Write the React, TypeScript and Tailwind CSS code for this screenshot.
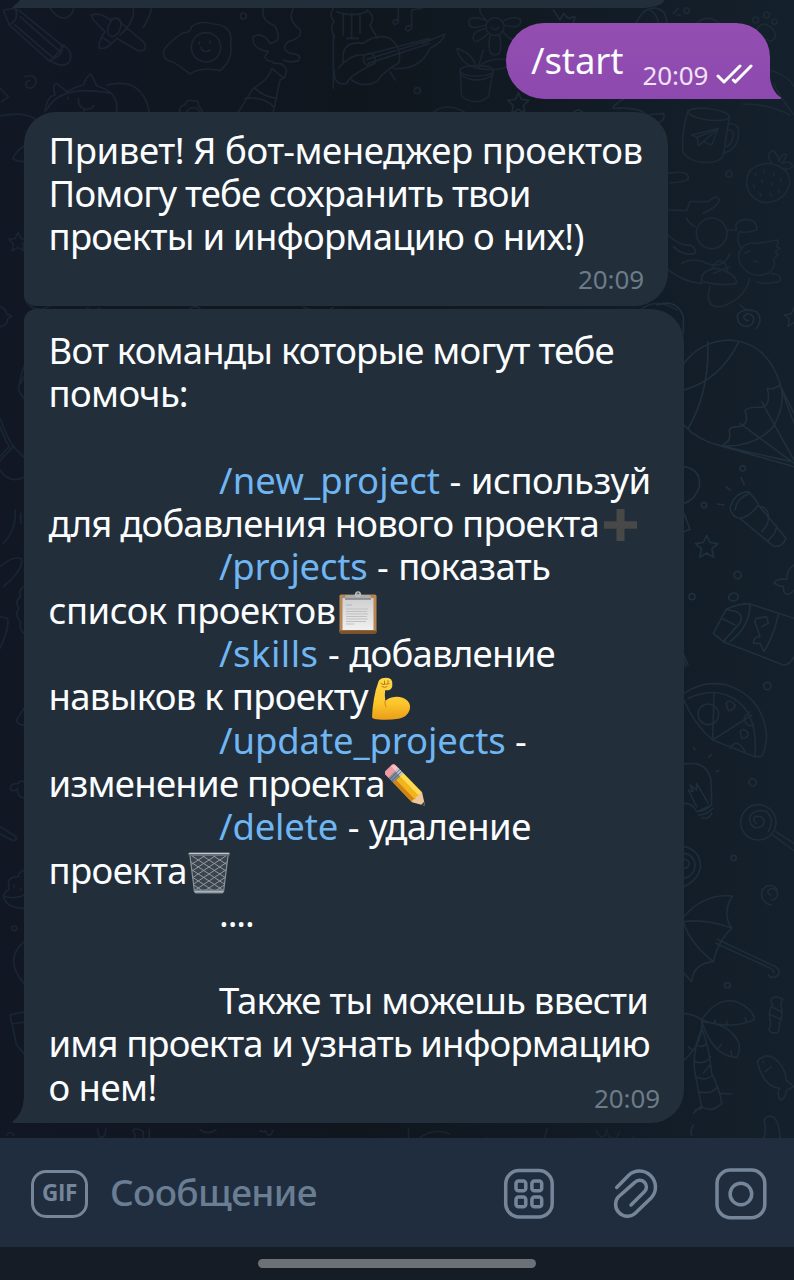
import type { ReactNode } from "react";

/* ---------- wallpaper ---------- */

const STAR = "M0 -32 L9 -12 L32 -9 L15 6 L20 30 L0 18 L-20 30 L-15 6 L-32 -9 L-9 -12Z";

function Wallpaper() {
  return (
    <svg
      className="absolute inset-0"
      width="794"
      height="1138"
      viewBox="0 0 794 1138"
      fill="none"
      strokeLinecap="round"
      strokeLinejoin="round"
      aria-hidden="true"
    >
      {/* top strip */}
      <g transform="scale(.33333)" stroke="#1b2531" strokeWidth="5">
        <path d="M10 30 L45 25 L62 35 L190 140 L150 185 L28 75 Z M45 25 Q60 55 28 75 M60 50 L180 155 M45 75 L155 170 M190 135 Q225 160 205 190 Q180 205 150 180 M180 130 Q200 165 150 180" />
        <path d="M150 25 Q170 55 195 55 Q220 45 220 25" />
        <path d="M275 45 Q300 35 330 60 Q350 45 365 70 L435 130 Q440 160 410 150 L350 115 Q320 150 300 145 Q290 130 315 95 L280 60Z M400 25 Q405 65 360 105 M455 25 Q445 60 430 83 M305 110 l25 18" />
        <ellipse cx="343" cy="82" rx="18" ry="29" transform="rotate(22 343 82)" />
        <path d="M75 230 Q108 220 108 248 Q100 270 80 262 Q70 245 90 242 M0 265 L25 290 L5 305" />
        <path d="M135 335 Q140 290 165 285 Q155 255 170 250 Q190 265 200 275 Q240 255 250 255 Q262 225 272 222 Q285 245 290 258 Q340 270 350 310 V340 M140 330 Q180 250 335 280 M320 255 Q430 230 448 338 M235 295 q0 28 18 32 t28 -10 M252 325 v12 M205 292 v6" />
        <path d="M540 340 q-5 -25 15 -25 q5 -20 25 -12 q20 -5 15 15 q15 10 10 25 M560 335 q20 -25 40 0" />
        <path d="M490 155 Q500 130 550 98 Q570 100 575 80 Q600 60 640 72 Q700 75 692 130 Q700 180 660 212 Q600 200 570 222 Q530 190 515 185 Q490 180 490 155Z M602 142 q8 20 28 8 M598 132v-6 M630 130v-8" />
        <circle cx="618" cy="142" r="44" />
        <circle cx="730" cy="48" r="9" />
        <path d="M790 25 Q780 60 825 78 Q850 125 810 130 Q790 95 760 110 Q752 145 805 155 Q780 180 820 185 M880 25 Q860 60 900 88 Q910 112 865 125 Q840 145 870 160 Q910 162 895 182 Q870 190 850 180" />
        <path d="M820 190 Q850 185 860 210 L855 232 L840 240 L820 335 M815 205 Q810 235 760 265 L712 340 M735 295 Q795 290 820 320 M765 265 Q790 290 830 295 M815 205 l38 30" />
        <path d="M1000 25 q-15 20 2 40 q-15 20 2 45 M1100 30 q30 20 10 45 l22 40 M1000 110 V265 M1030 40v65 M1055 40v75 M1080 40v60 M1040 115h35 M1010 35 q45 18 90 0" />
        <path d="M1030 190 Q1020 120 1090 130 Q1130 100 1170 115 Q1210 150 1195 190 Q1150 215 1130 245 Q1090 265 1055 240 M1095 165 L1290 115 M1105 190 L1290 130 M1100 178 L1285 122 M1270 130 L1335 102 Q1330 125 1290 145 Q1260 212 1180 205 M1015 205 Q1050 160 1095 165 M1125 190 Q1050 225 1040 250 Q1000 260 1003 210 M1170 215 l15 25" />
        <circle cx="1108" cy="178" r="18" />
        <path d="M1195 25 v40 q-10 15 -16 2 q0 -10 16 -8 M1265 25 l-30 5 v55 q-12 15 -18 2 q0 -12 18 -10" />
        <circle cx="1252" cy="272" r="9" />
        <path d="M1380 210 L1385 290 Q1430 320 1465 290 L1480 210 M1382 225 Q1430 255 1480 225 M1430 205 Q1420 160 1370 145 Q1380 190 1430 205 M1435 205 Q1455 170 1540 180 Q1520 220 1435 205 M1435 200 L1450 150" />
        <ellipse cx="1430" cy="212" rx="50" ry="16" />
        <circle cx="1485" cy="80" r="27" />
        <path d="M1458 75 Q1400 95 1408 60 Q1420 45 1460 62 Q1425 25 1450 15 M1512 75 Q1565 90 1562 60 Q1550 45 1510 62 M1465 100 Q1420 140 1420 115 Q1415 95 1458 85 M1470 105 Q1460 165 1485 165 Q1510 165 1498 105 M1508 95 Q1545 135 1550 110 M1474 82 q10 14 22 0" />
        <path d="M1300 337 Q1340 305 1395 337" />
      </g>
      {/* upper right */}
      <g transform="translate(490 0) scale(.33333)" stroke="#1d2a36" strokeWidth="5">
        <path d="M190 30 l20 30 l10 -20 l15 15 l20 -5 l-5 18 M440 68 Q460 20 500 25 Q530 30 530 68 M480 30 q20 10 25 38 M550 40 l15 -15 M560 45 h10 M620 70 Q650 40 690 70" />
        <circle cx="590" cy="32" r="8" />
        <path d="M800 110 Q795 75 825 72 Q860 85 855 115 Q840 130 830 118" />
        <circle cx="797" cy="60" r="9" />
        <circle cx="830" cy="45" r="9" />
        <circle cx="853" cy="65" r="8" />
        <path d="M840 210 Q900 230 912 260 M850 250 Q870 290 912 345 M760 312 Q830 310 900 345" />
        <path transform="translate(85 310)" d={STAR} />
        <path d="M250 337 q15 -15 28 0 M370 320 Q390 300 400 298 M370 325 Q450 320 470 345 L520 340 Q530 360 500 370" />
        <path d="M595 330 Q575 390 578 455 Q600 490 650 487 Q690 488 700 465 L718 350 M715 372 Q755 365 743 420 Q735 450 705 458 M715 390 Q735 390 728 415 Q722 435 710 440 M605 405 L685 385 L665 435 L640 425 L625 437 L622 412Z M622 412 L682 388 L640 425" />
        <ellipse cx="657" cy="343" rx="62" ry="17" transform="rotate(7 657 343)" />
        <circle cx="717" cy="522" r="9" />
        <path d="M770 555 Q765 495 835 490 Q905 500 898 555 Q885 605 825 608 Q780 600 770 555Z M845 488 Q825 460 850 452 Q865 465 868 485 Q875 455 890 465 Q885 480 875 490 Q905 480 908 500 Q895 512 875 505 M795 520l3 8 M820 510l3 8 M850 520l3 8 M790 555l3 8 M815 540l3 8 M845 550l3 8 M870 535l3 8 M810 580l3 8 M840 580l3 8 M865 570l3 8" />
        <path d="M535 520 Q590 510 595 530 Q598 547 540 548 M535 630 L590 632 L600 605 L655 605 Q680 580 688 600 Q685 620 640 640 M535 705 Q570 740 600 735 Q620 745 615 760 Q580 770 550 740 M590 655 q5 15 25 25 M710 690 Q740 690 740 690 Q730 665 765 658 Q805 660 800 690 Q770 700 748 695 Q735 725 755 745" />
        <circle cx="665" cy="700" r="46" />
        <path d="M755 745 Q770 725 800 730 L865 720 L860 740 L870 745 L855 755 L865 765 L850 775 Q860 800 835 820 Q780 840 750 790 Q740 760 755 745Z M765 760l15 -8 M790 785 q10 -5 15 3 M845 820 Q880 825 868 845 Q820 855 800 845" />
        <path d="M575 790 Q610 770 650 790 Q700 810 720 760 M635 845 Q630 810 680 805 Q740 820 740 850 Q690 860 640 845 M660 860 Q640 930 700 918 Q770 890 778 835 M535 810 Q590 850 635 850 M668 805 Q680 770 705 790 L715 820 M670 820 L720 800" />
        <path d="M450 930 Q500 890 560 930 M750 915 q20 15 20 15" />
      </g>
      {/* right column, upper half */}
      <g transform="translate(640 290) scale(.33333)" stroke="#1f2f3c" strokeWidth="5">
        <path d="M50 45 Q110 25 130 80 V130" />
        <path d="M325 92 Q310 90 312 78 Q325 65 340 80 Q345 105 320 110 Q290 105 292 75 Q310 50 350 65 Q370 90 350 115" />
        <path transform="translate(462 82) scale(.9)" d={STAR} />
        <path d="M132 220 Q180 155 265 150 Q380 155 420 280 Q440 340 400 410 Q340 475 240 467 Q170 450 132 405 M203 155 Q210 300 145 415 M297 155 Q240 270 132 300 M420 285 Q400 300 382 295 Q395 350 360 352 Q325 350 315 362 Q330 405 295 410 Q265 410 268 425 Q275 455 250 462 M240 467 L462 530 M300 400 L462 520 M365 335 L462 510 M420 285 L462 370 M425 300 L462 400 M240 467 L455 515" />
        <circle cx="308" cy="535" r="8" />
        <circle cx="192" cy="645" r="8" />
        <circle cx="293" cy="855" r="11" />
        <circle cx="156" cy="920" r="9" />
        <path d="M132 530 Q185 540 178 590 Q165 630 132 640 M132 670 L150 718 L132 725" />
        <path d="M303 562 l10 22 M258 590 l12 10 M232 642 l20 3" />
        <path d="M270 655 Q280 610 325 605 Q350 630 355 645 Q330 680 300 685 Q275 680 270 655Z M285 660 Q290 625 325 612 M300 685 L400 768 Q425 775 438 745 L355 645 M360 650 Q380 650 385 675 M385 675 Q390 700 365 725 M410 705 Q410 730 385 750" />
        <path transform="translate(200 770) scale(1.05)" d={STAR} />
        <path d="M462 825 Q440 840 440 868 Q405 865 403 880 Q420 890 430 890 Q430 915 445 912 Q462 905 462 900" />
        <path d="M265 925 Q270 905 290 910 Q300 920 290 930 Q275 938 265 925Z M220 1030 L258 958 Q300 940 330 942 L462 985 M220 1030 L250 1055 L430 1125 Q450 1125 462 1100 M258 958 L290 965 Q320 985 285 1015 L250 1055 M330 942 Q330 1010 270 1055 M245 985 L285 1005 M415 975 Q400 1040 372 1085 L360 1060 L340 1060 Q340 1040 360 1040 L350 1010 Q340 990 350 985 L380 980 L385 1000 L365 1010 M300 945 l15 -5" />
        <path d="M132 1095 l12 30 M132 1110 l5 20" />
        <circle cx="382" cy="1188" r="11" />
      </g>
      {/* right column, lower half */}
      <g transform="translate(640 660) scale(.33333)" stroke="#1e2d39" strokeWidth="5">
        <path d="M132 100 Q190 60 260 75 Q370 110 380 230 Q378 265 365 290 L345 290 L218 240 Q160 190 132 120 M145 115 Q220 80 280 115 Q355 160 345 288 M222 100 L218 240 L335 165 M270 265 Q290 230 315 275 M330 155 Q305 170 318 190 Q325 200 342 195 M258 130 Q270 115 285 135 Q285 150 265 152Z M300 215 Q310 200 325 220 Q325 235 305 235Z" />
        <circle cx="205" cy="163" r="31" />
        <circle cx="338" cy="367" r="11" />
        <circle cx="281" cy="594" r="8" />
        <circle cx="262" cy="976" r="8" />
        <path d="M160 262l5 8 M205 292l10 -8 M228 335l8 -4 M132 312 Q200 300 213 360 Q215 400 215 435 L170 455 Q160 430 132 430 M172 455 Q195 455 215 435 M175 465 Q200 465 218 445 M185 473 Q205 480 215 460 M170 440 L145 390 L160 395 L150 375 L170 390 L170 370 L205 430" />
        <circle cx="355" cy="487" r="53" />
        <path d="M350 490 Q335 480 345 470 Q370 465 372 485 Q370 505 345 503 Q322 490 332 465 Q350 445 380 455 Q405 480 385 515 M398 525 L462 572 M407 515 L462 550" />
        <path d="M132 560 Q180 570 182 620 Q175 660 132 680 M132 580 Q165 585 165 620 Q160 650 132 655 M132 597 q18 5 15 15 q-3 15 -15 12" />
        <path d="M392 705 Q380 700 385 690 Q400 680 412 695 Q415 718 395 720 M412 700 Q415 680 390 676 Q362 680 365 710 Q375 735 395 735" />
        <path d="M132 770 Q190 700 277 708 Q245 760 275 805 Q235 840 220 905 Q160 910 155 965 L132 940 M132 785 Q200 775 275 805 M132 790 Q150 850 220 905 M232 838 L395 915 Q425 925 415 945 Q395 960 385 945 M228 850 L385 922 Q405 930 400 938" />
        <path d="M185 1080 Q230 1010 290 1025 Q345 1050 342 1080 Q270 1110 185 1080Z M185 1085 Q270 1090 297 1150 Q300 1180 290 1192 Q220 1190 185 1085 M132 1060 Q170 1065 185 1080 Q190 1150 132 1200 M225 1092v-12 M260 1098v-14 M320 1085l-5 -12 M235 1165l10 -12 M275 1188l-2 -14 M145 1160l10 10 M185 1105 Q155 1180 165 1240 L185 1340 Q215 1360 245 1330 Q240 1290 215 1240 Q205 1150 185 1105 M168 1155 Q190 1165 200 1150 M165 1205 Q195 1215 212 1190 M168 1250 Q200 1265 218 1245 M175 1295 Q215 1305 232 1280 M190 1240 l20 -25 M240 1300 l35 2 M160 1360 l25 -22 M165 1350l20 -5 M160 1395 Q150 1410 155 1425" />
        <path d="M395 1015 Q410 1005 428 1018 Q420 1030 425 1045 Q428 1075 418 1090 Q420 1110 412 1118 Q390 1122 387 1108 Q395 1095 390 1080 Q385 1050 398 1035 Q390 1025 395 1015 M395 1040l28 15 M393 1065l28 12" />
        <path d="M352 1205 Q380 1170 415 1205 Q440 1235 438 1260 L462 1280 L440 1290 Q435 1320 420 1320 Q410 1300 418 1285 Q370 1280 352 1205Z M375 1235l20 -15 M370 1205v3" />
        <path d="M372 1435 Q380 1410 372 1380 Q385 1360 405 1375 Q420 1400 420 1435" />
      </g>
      {/* left gutter */}
      <g transform="translate(0 90) scale(.33333)" stroke="#1a2534" strokeWidth="5">
        <path d="M0 78 Q80 62 112 92 M78 165 Q50 180 38 205 Q55 218 78 213" />
        <path transform="translate(54 456) scale(.9)" d={STAR} />
        <path d="M0 650 Q18 655 20 672 L35 678 L22 688 Q25 705 0 710 M74 620 Q80 655 120 658 Q140 655 150 645 M260 655 q20 10 40 0 M570 655 q15 -10 30 0 M910 652 q60 20 90 0" />
        <path d="M75 820 Q60 860 55 900 L75 930 M62 880l14 -30 M0 985 Q20 1040 40 1070 L0 1112 M0 1010 Q15 1050 28 1070 L0 1100 M0 1140 Q30 1185 75 1160 M40 1070 L75 1105 M45 1260 Q50 1320 10 1360 M62 1270v30 M0 1430 Q40 1395 65 1407 Q70 1440 10 1490" />
      </g>
      <g transform="translate(0 580) scale(.33333)" stroke="#1a2534" strokeWidth="5">
        <path d="M0 110 L22 115 Q30 140 0 205 M72 20 q-20 10 -10 30 q-20 15 -5 35 q-15 20 5 40 q-5 25 10 35 M75 380 q-15 25 -25 40 q0 15 25 15 M72 605 q-15 -5 -15 5 q-30 0 -25 20 q15 5 20 -5 q0 30 22 28 M0 740 L45 768 Q55 780 40 782 L0 762" />
        <path d="M75 870 q-20 5 -20 20 q-30 0 -30 20 q5 15 0 20 q-15 10 -15 20 q10 35 65 35 M10 948 q30 12 65 -4 M42 915v6 M62 925v6 M72 1085 Q10 1140 72 1210 M75 1295 L30 1305 L50 1395 L75 1425 M35 1332 L75 1326 M20 1665 q10 -15 22 0" />
        <circle cx="43" cy="1045" r="7" />
      </g>
      {/* strip above the composer */}
      <g transform="translate(20 1110) scale(.4936)" stroke="#1a2530" strokeWidth="3.4">
        <path d="M157 38 q2 18 8 18 q9 -2 9 -18 M230 45 q-5 -8 10 -6 q10 0 10 12 M232 48 l6 36 M250 45 v36 M262 40 v30 q5 -15 18 -12 q15 3 10 26 M280 60 q25 -5 38 22 M365 40 q15 12 32 0 M487 42 q8 5 10 0 q8 18 15 0 M555 84 Q610 45 680 84 M645 68 l10 14 M787 38 v45 M805 60 Q835 35 870 48 M808 84 Q845 50 892 84 M1068 38 Q1060 70 1045 80 M1168 42 q8 20 18 8 q5 -5 2 -10 M1192 52 q15 15 22 -8 M1150 84 q10 -15 18 -3 M1175 84 q5 -20 20 -8 M1210 78 L1243 55 L1262 84 M1225 70l15 10 M0 84 q10 -12 20 0" />
        <circle cx="946" cy="62" r="5" fill="#1a2530" />
        <path d="M938 76 q8 -12 16 0" />
      </g>
    </svg>
  );
}

/* ---------- emoji ---------- */

function Emoji({ children, label, className = "" }: { children: ReactNode; label: string; className?: string }) {
  return (
    <svg className={`mt-0.5 shrink-0 ${className}`} width="44" height="44" viewBox="0 0 44 44" role="img" aria-label={label}>
      {children}
    </svg>
  );
}

const Plus = () => (
  <Emoji label="➕">
    <path d="M17.5 5h8v12.300h12.500v7.400h-12.500v12.300h-8v-12.300h-12.500v-7.400h12.500z" fill="#484848" />
  </Emoji>
);

const Clipboard = () => (
  <Emoji label="📋">
    <defs>
      <linearGradient id="board" x1="0" x2="1">
        <stop offset="0" stopColor="#b98a55" />
        <stop offset=".5" stopColor="#a37445" />
        <stop offset="1" stopColor="#bb8850" />
      </linearGradient>
      <linearGradient id="sheet" x1="0" y1="0" x2="0" y2="1">
        <stop offset="0" stopColor="#cfcfd0" />
        <stop offset="1" stopColor="#f0f0f1" />
      </linearGradient>
    </defs>
    <rect x="3.500" y="3.500" width="37" height="39" rx="1.800" fill="url(#board)" />
    <path d="M4 39.500h36v1.800q0 1.200-1.200 1.200h-33.600q-1.200 0-1.200-1.200z" fill="#7d532c" />
    <path d="M6.500 7h31v32h-31z" fill="url(#sheet)" />
    <path d="M10 14h6" stroke="#9fb9d2" strokeWidth="1" />
    <path d="M10 18h22M10 20.500h21M10 23h22M10 25.500h21M10 28h22M10 30.500h20M10 33h8" stroke="#bfc0c2" strokeWidth="1.100" />
    <path d="M9 8.500V5.500q0-1.500 1.500-1.500H17q2 0 2.800-1.500h4.400Q25 4 27 4h6.500q1.500 0 1.500 1.500v3z" fill="#a9abae" />
    <path d="M9 8h26" stroke="#77797c" strokeWidth="1.200" />
    <circle cx="22" cy="3.200" r="2.300" fill="none" stroke="#bfc2c5" strokeWidth="1.300" />
  </Emoji>
);

const Biceps = () => (
  <Emoji label="💪" className="ml-px">
    <defs>
      <linearGradient id="skin" x1="0" y1="0" x2="0" y2="1">
        <stop offset="0" stopColor="#ffd84a" />
        <stop offset=".6" stopColor="#fcc62c" />
        <stop offset="1" stopColor="#eb9d18" />
      </linearGradient>
    </defs>
    <path
      d="M9.500 4.500Q11 1.200 15 1q5-.8 7.200 1.500Q24 5 23.300 9q-.5 3.500-3.800 4.200-1.800.3-3.300 0-.9 4.800.1 10.800Q20 20.200 27 19.800q7-.2 11.500 4 3.600 4 2.200 9-2.200 7.200-11 8.900-9.700 1.600-19.700.8-5.500-.2-7-2 .2-9 2-19Q6.600 12 9.500 4.500Z"
      fill="url(#skin)"
    />
    <path d="M16.200 24q-.8 2.800.8 5.800" stroke="#dc9218" strokeWidth="1.200" fill="none" strokeLinecap="round" />
    <path d="M12 6.500q2 1.800 4.500.6 2 .6 3.800-.7M15.500 4v3M19 3.500v3M13 9.500q2.500 2 5 .2" stroke="#b97a16" strokeWidth="1" fill="none" strokeLinecap="round" />
  </Emoji>
);

const Pencil = () => (
  <Emoji label="✏️">
    <g transform="translate(0 1) rotate(46 22 22)">
      <path d="M-4.500 17.500q0-2.500 3-2.500h5v14h-5q-3 0-3-2.500z" fill="#ee9aa5" />
      <path d="M-4.300 19q.3-3.600 4-3.600h3.800v3.600z" fill="#f9c0c6" />
      <path d="M2.500 15h7v14h-7z" fill="#7e8b98" />
      <path d="M2.500 15h7v4.500h-7z" fill="#bcc7d0" />
      <path d="M4.500 15v14M7 15v14" stroke="#566471" strokeWidth=".9" />
      <path d="M9.500 15h27v14h-27z" fill="#f2b51b" />
      <path d="M9.500 15h27v4.600h-27z" fill="#ffdb53" />
      <path d="M9.500 25h27v4h-27z" fill="#cf8513" />
      <path d="M36.500 15l11.500 7-11.500 7q-2.200-2.400 0-4.700-2.200-2.300 0-4.700-2.200-2.300 0-4.600z" fill="#ebc79a" />
      <path d="M44.500 19.900l3.500 2.100-3.500 2.100z" fill="#3f3f42" />
    </g>
  </Emoji>
);

const Trash = () => (
  <Emoji label="🗑️">
    <defs>
      <clipPath id="bin">
        <path d="M3 4h38l-4.500 37h-29z" />
      </clipPath>
    </defs>
    <path d="M3 4h38l-4.500 37h-29z" fill="#3b444d" />
    <g clipPath="url(#bin)" stroke="#9099a2" strokeWidth="1">
      <path d="M-4 6l46 30M-4 13l46 30M-4 20l46 30M-4-1l46 30M-4-8l46 30M-4-15l46 30M-4 27l46 30M48 6L2 36M48 13L2 43M48 20L2 50M48-1L2 29M48-8L2 22M48-15L2 15M48 27L2 57" />
    </g>
    <path d="M3 5l4.500 36M41 5l-4.500 36" stroke="#89929b" strokeWidth="1.200" />
    <path d="M7 38.500h30l-.4 2.500q-.3 1.500-1.800 1.500h-25.600q-1.500 0-1.800-1.500z" fill="#7b858e" />
    <path d="M7.500 40.800h29" stroke="#b8c0c7" strokeWidth="1.100" />
    <rect x="1.200" y="1.300" width="42" height="3.600" rx="1.800" fill="#687179" />
    <path d="M2.500 2.500h39" stroke="#c2c8cd" strokeWidth="1.200" strokeLinecap="round" />
  </Emoji>
);

/* ---------- messages ---------- */

function Line({ children, indent = false }: { children?: ReactNode; indent?: boolean }) {
  return (
    <div className={`flex h-[43.37px] whitespace-pre ${indent ? "pl-[170.500px]" : ""}`}>{children}</div>
  );
}

function Command({ children, className = "" }: { children: string; className?: string }) {
  return <span className={`text-[#6fb6f3] ${className}`}>{children}</span>;
}

function Time({ className = "text-[#6c7b89]" }: { className?: string }) {
  return <span className={`text-[26px] leading-[30px] tracking-[-0.1px] ${className}`}>20:09</span>;
}

function OutgoingMessage() {
  return (
    <div className="relative ml-[506px] mt-[15px] flex h-[76px] w-[264px] shrink-0 rounded-tl-[38px] rounded-tr-[34px] rounded-bl-[38px] bg-linear-to-b from-[#944eb1] to-[#8d49af] pl-[25px] pt-[16px]">
      <span className="tracking-[-0.1px]">/start</span>
      <div className="ml-[19px] mt-[20.500px] flex">
        <Time className="text-[#f1e2f7]" />
        <svg className="ml-[7px]" width="40" height="24" viewBox="717 60 40 24" fill="none" stroke="#fff" strokeWidth="3" strokeLinecap="round" strokeLinejoin="round" aria-hidden="true">
          <path d="M720 76L726 82L742 66M735.300 80L737.300 82L753 66" />
        </svg>
      </div>
      <svg className="absolute bottom-0 left-[262px]" width="16" height="26" viewBox="0 0 16 26" aria-hidden="true">
        <path d="M0 0h1.500Q2.500 18 13 24.500 13.500 26 12 26H0z" fill="#8d49af" />
      </svg>
    </div>
  );
}

function Greeting() {
  return (
    <div className="ml-6 mt-[13px] h-[194px] w-[644px] shrink-0 rounded-l-[32px] rounded-r-[33px] rounded-bl-[12px] bg-[#222e39] pl-[24.500px] pr-6 pt-[16.500px]">
      <Line><span className="tracking-[-0.44px]">Привет! Я бот-менеджер проектов</span></Line>
      <Line><span className="tracking-[-0.82px]">Помогу тебе сохранить твои</span></Line>
      <Line><span className="tracking-[-0.72px]">проекты и информацию о них!)</span></Line>
      <div className="mt-[5px] flex justify-end"><Time /></div>
    </div>
  );
}

function CommandList() {
  return (
    <div className="relative ml-6 mt-[3px] h-[814px] w-[660px] shrink-0 rounded-tl-[12px] rounded-r-[33px] bg-[#222e39] pl-[24.500px] pr-6 pt-[19.500px]">
      <Line><span className="tracking-[-0.79px]">Вот команды которые могут тебе</span></Line>
      <Line><span className="tracking-[-0.65px]">помочь:</span></Line>
      <Line />
      <Line indent>
        <Command className="tracking-[0.05px]">/new_project</Command>
        <span> - </span>
        <span className="tracking-[-0.52px]">используй</span>
      </Line>
      <Line>
        <span className="tracking-[-0.83px]">для добавления нового проекта</span>
        <Plus />
      </Line>
      <Line indent>
        <Command className="tracking-[-0.25px]">/projects</Command>
        <span> - </span>
        <span className="tracking-[-0.65px]">показать</span>
      </Line>
      <Line>
        <span className="tracking-[-0.55px]">список проектов</span>
        <Clipboard />
      </Line>
      <Line indent>
        <Command className="tracking-[0.45px]">/skills</Command>
        <span> - </span>
        <span className="tracking-[-0.75px]">добавление</span>
      </Line>
      <Line>
        <span className="tracking-[-0.7px]">навыков к проекту</span>
        <Biceps />
      </Line>
      <Line indent>
        <Command className="tracking-[-0.12px]">/update_projects</Command>
        <span> -</span>
      </Line>
      <Line>
        <span className="tracking-[-0.72px]">изменение проекта</span>
        <Pencil />
      </Line>
      <Line indent>
        <Command className="tracking-[-0.17px]">/delete</Command>
        <span> - </span>
        <span className="tracking-[-0.5px]">удаление</span>
      </Line>
      <Line>
        <span className="tracking-[-0.62px]">проекта</span>
        <Trash />
      </Line>
      <Line indent><span className="tracking-[-1.1px]">....</span></Line>
      <Line />
      <Line indent><span className="tracking-[-0.78px]">Также ты можешь ввести</span></Line>
      <Line><span className="tracking-[-0.9px]">имя проекта и узнать информацию</span></Line>
      <div className="flex justify-between">
        <Line><span className="tracking-[-0.54px]">о нем!</span></Line>
        <div className="mt-[7px]"><Time /></div>
      </div>
      <svg className="absolute -left-3 bottom-0" width="14" height="26" viewBox="0 0 14 26" aria-hidden="true">
        <path d="M14 0h-2Q11 17 .8 24.300 0 25.500 1 26H14z" fill="#222e39" />
      </svg>
    </div>
  );
}

/* ---------- composer ---------- */

function Composer() {
  return (
    <div className="flex h-[109px] shrink-0 items-center bg-[#202d3e] pl-[31px] pr-[26px] pt-[2px] text-[#75869a]">
      <div className="flex h-[48px] w-[57px] items-center justify-center rounded-[15px] border-[3.500px] border-current">
        <span className="font-['Open_Sans'] text-[22.500px] font-bold leading-none tracking-[-0.4px]">GIF</span>
      </div>
      <span className="mb-[3px] ml-[22px] flex-1 text-[37px] font-medium leading-[50px] tracking-[-0.65px] text-[#6a7e93]">Сообщение</span>
      <svg width="52" height="52" viewBox="0 0 52 52" fill="none" stroke="currentColor" strokeWidth="3.500" aria-hidden="true">
        <rect x="2.700" y="2.500" width="46.500" height="46.500" rx="13.500" />
        <rect x="13" y="13" width="9.800" height="9.800" rx="2.600" />
        <rect x="28.900" y="13" width="9.800" height="9.800" rx="2.600" />
        <rect x="13" y="29" width="9.800" height="9.800" rx="2.600" />
        <rect x="28.900" y="29" width="9.800" height="9.800" rx="2.600" />
      </svg>
      <svg className="ml-[56px]" width="50" height="52" viewBox="611 1168 50 52" fill="none" stroke="currentColor" strokeWidth="3.500" strokeLinecap="round" strokeLinejoin="round" aria-hidden="true">
        <path d="M616.700 1187.500L628.700 1175.200A16 16 0 0 1 651.300 1197.800L635.200 1213.300A11.800 11.800 0 0 1 618.500 1196.700L634.800 1182.400A6.600 6.600 0 0 1 644.600 1191.600L631 1205" />
      </svg>
      <svg className="ml-[53px]" width="54" height="54" viewBox="0 0 54 54" fill="none" stroke="currentColor" strokeWidth="3.500" aria-hidden="true">
        <rect x="3" y="3" width="47.800" height="47.800" rx="13.500" />
        <circle cx="26.900" cy="27" r="10.800" />
      </svg>
    </div>
  );
}

export default function App() {
  return (
    <div className="flex h-[1280px] w-[794px] flex-col overflow-hidden bg-[#161c25] font-['Noto_Sans',sans-serif] text-[36.500px] leading-[43.370px] text-[#fbfdff]">
      <main className="relative h-[1138px] shrink-0 overflow-hidden bg-linear-to-r from-[#111824] via-[#0f161e] via-45% to-[#14202b]">
        <Wallpaper />
        <div className="relative flex h-full flex-col">
          <div className="relative ml-6 h-2 w-[640px] shrink-0 rounded-br-[24px_8px] bg-[#222e39]">
            <svg className="absolute -left-3 top-0" width="14" height="8" viewBox="0 0 14 8" aria-hidden="true">
              <path d="M14 0H8Q5 4 .8 6.500 0 7.500 1 8H14z" fill="#222e39" />
            </svg>
          </div>
          <OutgoingMessage />
          <Greeting />
          <CommandList />
        </div>
      </main>
      <Composer />
      <div className="flex h-[33px] shrink-0 justify-center pt-3">
        <div className="h-[9px] w-[278px] rounded-full bg-[#6d7077]" />
      </div>
    </div>
  );
}
